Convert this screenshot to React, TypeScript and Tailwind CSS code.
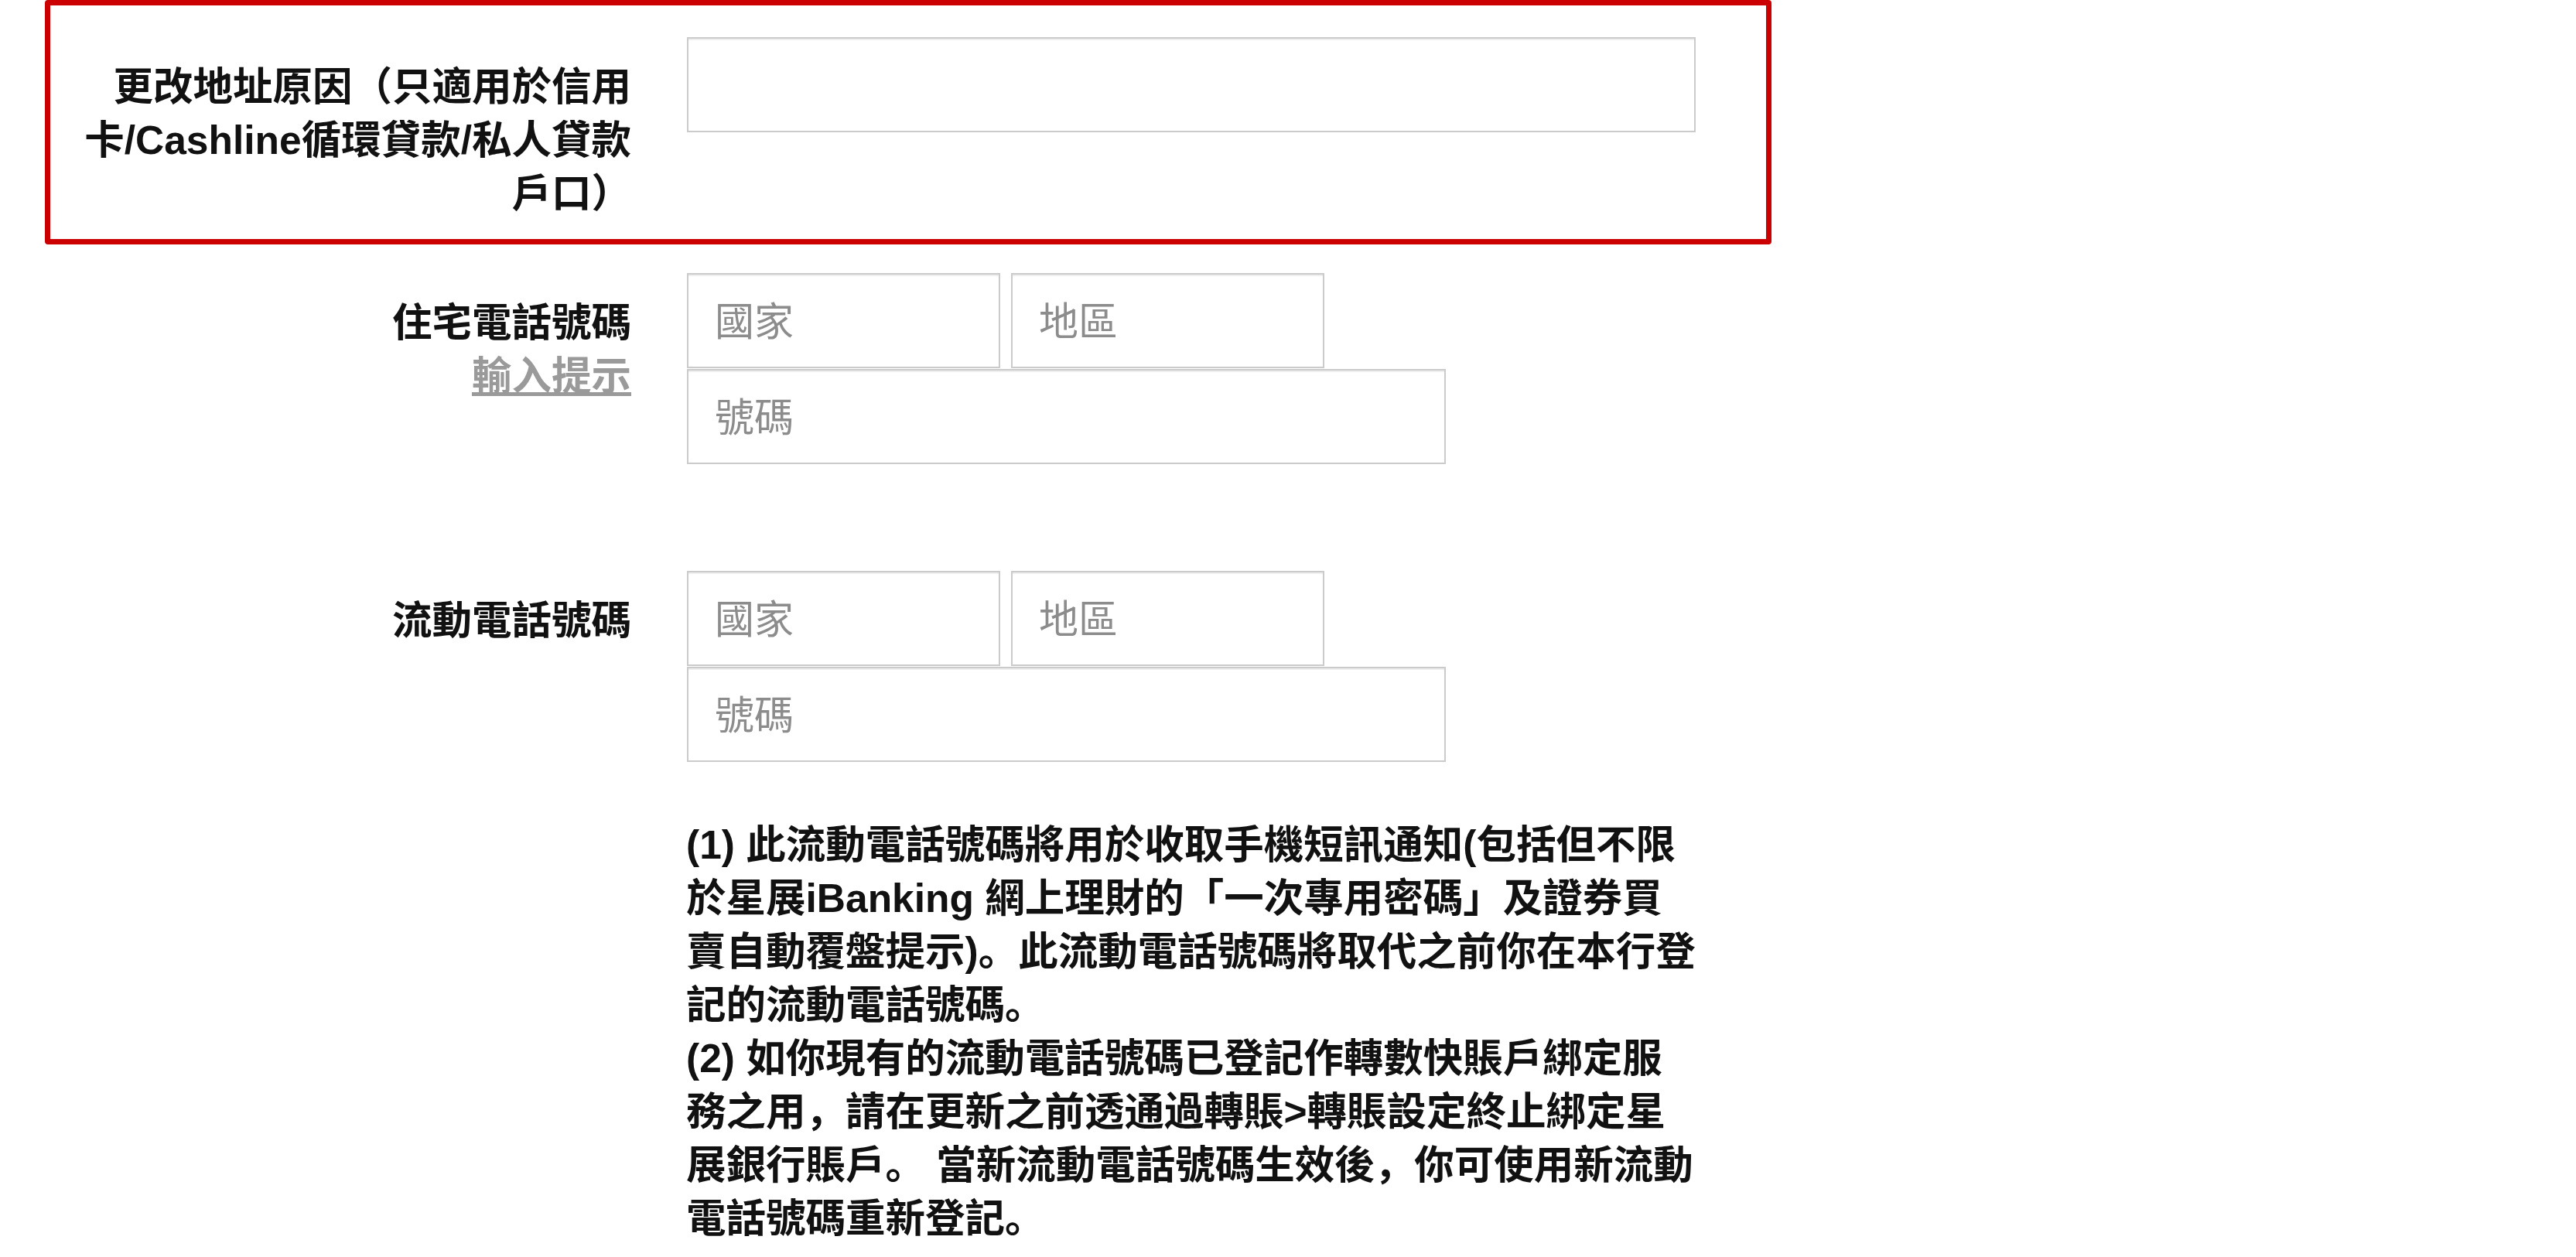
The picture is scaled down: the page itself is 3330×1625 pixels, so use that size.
import React from 'react'

type PhoneFieldsProps = {
  label: string
  hint?: string
}

const labelClass =
  'w-[714px] shrink-0 pt-[30px] text-right text-[51.5px] leading-[69px] font-bold text-[#111]'

const inputClass =
  'h-[123px] border-2 border-[#cbcbcb] bg-white px-[34px] pt-[4px] text-[51px] text-[#333] shadow-[inset_0_2px_1px_rgba(0,0,0,0.07)] outline-none placeholder:text-[#8c8c8c]'

function PhoneFields({ label, hint }: PhoneFieldsProps) {
  return (
    <div className="flex pl-[44px]">
      <div className={labelClass}>
        <div>{label}</div>
        {hint && (
          <a href="#" className="text-[#9a9a9a] underline">
            {hint}
          </a>
        )}
      </div>

      <div className="ml-[72px] flex flex-col">
        <div className="flex gap-[14px]">
          <input type="text" placeholder="國家" className={`${inputClass} w-[405px]`} />
          <input type="text" placeholder="地區" className={`${inputClass} w-[405px]`} />
        </div>
        <input type="text" placeholder="號碼" className={`${inputClass} mt-px w-[981px]`} />
      </div>
    </div>
  )
}

export default function App() {
  return (
    <div className="min-h-screen bg-white pl-[58px] font-['Liberation_Sans','Noto_Sans_CJK_SC',sans-serif] text-[#111]">
      <div className="w-[2232px]">
        <div className="flex rounded-[4px] border-[7px] border-[#cc0000] pb-[24px] pl-[37px] pt-[41px]">
          <label className="w-[714px] shrink-0 pt-[30px] text-right text-[51.5px] leading-[69px] font-bold">
            更改地址原因（只適用於信用卡/Cashline循環貸款/私人貸款戶口）
          </label>
          <div className="ml-[72px]">
            <input type="text" className={`${inputClass} w-[1304px]`} />
          </div>
        </div>

        <div className="mt-[37px]">
          <PhoneFields label="住宅電話號碼" hint="輸入提示" />
        </div>

        <div className="mt-[138px]">
          <PhoneFields label="流動電話號碼" />
        </div>

        <div className="mt-[73px] pl-[829px]">
          <p className="w-[1309px] text-[51.5px] leading-[69px] font-bold">
            (1) 此流動電話號碼將用於收取手機短訊通知(包括但不限於星展iBanking 網上理財的「一次專用密碼」及證券買賣自動覆盤提示)。此流動電話號碼將取代之前你在本行登記的流動電話號碼。
            <br />
            (2) 如你現有的流動電話號碼已登記作轉數快賬戶綁定服務之用，請在更新之前透通過轉賬{'>'}轉賬設定終止綁定星展銀行賬戶。 當新流動電話號碼生效後，你可使用新流動電話號碼重新登記。
          </p>
        </div>
      </div>
    </div>
  )
}
